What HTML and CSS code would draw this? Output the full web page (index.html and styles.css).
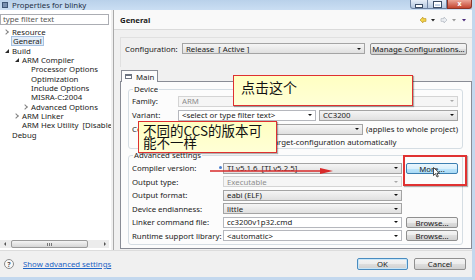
FILE: index.html
```html
<!DOCTYPE html>
<html lang="zh">
    <head>
        <meta charset="UTF-8">
        <meta name="viewport" content="width=device-width, initial-scale=1.0">
        <title>Properties for blinky</title>
        <link rel="stylesheet" href="styles.css">
    </head>
    <body>
        <div class="window">
            <div class="titlebar">
                <span class="app-icon"></span>
                <span class="title">Properties for blinky</span>
                <div class="caption-buttons">
                    <span class="cap cap-min"><i></i></span>
                    <span class="cap cap-max"><i></i></span>
                    <span class="cap cap-close">x</span>
                </div>
            </div>

            <div class="content">
                <!-- дерево страниц -->
                <div class="side">
                    <div class="filter">type filter text</div>
                    <ul class="tree">
                        <li class="l0"><span class="tw closed"></span>Resource</li>
                        <li class="l0"><span class="tw"></span><span class="sel">General</span></li>
                        <li class="l0"><span class="tw open"></span>Build</li>
                        <li class="l1"><span class="tw open"></span>ARM Compiler</li>
                        <li class="l2"><span class="tw"></span>Processor Options</li>
                        <li class="l2"><span class="tw"></span>Optimization</li>
                        <li class="l2"><span class="tw"></span>Include Options</li>
                        <li class="l2"><span class="tw"></span>MISRA-C:2004</li>
                        <li class="l2"><span class="tw closed"></span>Advanced Options</li>
                        <li class="l1"><span class="tw closed"></span>ARM Linker</li>
                        <li class="l1"><span class="tw"></span>ARM Hex Utility&nbsp; [Disabled]</li>
                        <li class="l0"><span class="tw"></span>Debug</li>
                    </ul>
                    <div class="hscroll">
                        <span class="sb-arrow left"></span>
                        <div class="sb-track">
                            <div class="sb-thumb"><span class="grip"></span></div>
                        </div>
                        <span class="sb-arrow right"></span>
                    </div>
                </div>

                <!-- страница свойств -->
                <div class="main">
                    <div class="page-head">
                        <span class="page-title">General</span>
                        <svg class="history" width="50" height="8" viewBox="0 0 50 8">
                            <path d="M2 4 L5 1 L5 2.6 L8 2.6 L8 5.4 L5 5.4 L5 7 Z" fill="#f3d34a" stroke="#b8901c" stroke-width="0.6"/>
                            <path d="M13 3 L17 3 L15 5.5 Z" fill="#222"/>
                            <path d="M29 4 L26 1 L26 2.6 L23 2.6 L23 5.4 L26 5.4 L26 7 Z" fill="#eceff3" stroke="#a9b0ba" stroke-width="0.6"/>
                            <path d="M34 3 L38 3 L36 5.5 Z" fill="#9a9a9a"/>
                            <path d="M44 3 L48 3 L46 5.5 Z" fill="#4b2a7a"/>
                        </svg>
                    </div>

                    <div class="config">
                        <div class="config-row">
                            <span class="config-label">Configuration:</span>
                            <div class="combo ro config-combo"><span class="val">Release&nbsp; [ Active ]</span><i class="arrow"></i></div>
                            <button class="btn manage">Manage Configurations...</button>
                        </div>
                    </div>

                    <div class="tabs">
                        <div class="tab"><span class="tab-icon"></span>Main</div>
                    </div>

                    <div class="tab-panel">
                        <fieldset class="group device">
                            <legend>Device</legend>
                            <div class="rows">
                                <div class="row">
                                    <span class="lbl">Family:</span>
                                    <div class="combo disabled grow"><span class="val">ARM</span><i class="arrow"></i></div>
                                </div>
                                <div class="row">
                                    <span class="lbl">Variant:</span>
                                    <div class="combo edit variant"><span class="val">&lt;select or type filter text&gt;</span><i class="arrow"></i></div>
                                    <div class="combo ro grow"><span class="val">CC3200</span><i class="arrow"></i></div>
                                </div>
                                <div class="row">
                                    <span class="lbl">Connection:</span>
                                    <div class="combo ro connection"><span class="val">Stellaris ICDI</span><i class="arrow"></i></div>
                                    <span class="note">(applies to whole project)</span>
                                </div>
                                <div class="row check-row">
                                    <span class="checkbox"></span>
                                    <span>Manage the project's target-configuration automatically</span>
                                </div>
                            </div>
                        </fieldset>

                        <fieldset class="group advanced">
                            <legend>Advanced settings</legend>
                            <div class="rows">
                                <div class="row">
                                    <span class="lbl">Compiler version:<i class="assist"></i></span>
                                    <div class="combo ro field"><span class="val">TI v5.1.6&nbsp; [TI v5.2.5]</span><i class="arrow"></i></div>
                                    <button class="btn side-btn hot">More...</button>
                                </div>
                                <div class="row">
                                    <span class="lbl">Output type:</span>
                                    <div class="combo disabled field"><span class="val">Executable</span><i class="arrow"></i></div>
                                </div>
                                <div class="row">
                                    <span class="lbl">Output format:</span>
                                    <div class="combo ro field"><span class="val">eabi (ELF)</span><i class="arrow"></i></div>
                                </div>
                                <div class="row">
                                    <span class="lbl">Device endianness:</span>
                                    <div class="combo ro field"><span class="val">little</span><i class="arrow"></i></div>
                                </div>
                                <div class="row">
                                    <span class="lbl">Linker command file:</span>
                                    <div class="combo edit field"><span class="val">cc3200v1p32.cmd</span><i class="arrow"></i></div>
                                    <button class="btn side-btn">Browse...</button>
                                </div>
                                <div class="row">
                                    <span class="lbl">Runtime support library:</span>
                                    <div class="combo edit field"><span class="val">&lt;automatic&gt;</span><i class="arrow"></i></div>
                                    <button class="btn side-btn">Browse...</button>
                                </div>
                            </div>
                        </fieldset>
                    </div>
                </div>
            </div>

            <div class="footer">
                <span class="help">?</span>
                <a class="advanced-link">Show advanced settings</a>
                <div class="actions">
                    <button class="btn default">OK</button>
                    <button class="btn">Cancel</button>
                </div>
            </div>

            <!-- пометки поверх скриншота -->
            <div class="callout click-note">点击这个</div>
            <div class="callout version-note">不同的CCS的版本可<br>能不一样</div>
            <div class="mark-box"></div>
            <svg class="mark-arrow" width="128" height="10" viewBox="0 0 128 10">
                <line x1="2" y1="5" x2="116" y2="5" stroke="#d92b2b" stroke-width="1.6"/>
                <path d="M112 2 L125 5 L112 8 Z" fill="#d92b2b"/>
            </svg>
            <svg class="cursor" width="7" height="11" viewBox="0 0 7 11">
                <path d="M0.5 0.5 L0.5 8.5 L2.5 6.6 L4 10 L5.3 9.4 L3.9 6.2 L6.5 6.2 Z" fill="#fff" stroke="#222" stroke-width="0.8"/>
            </svg>
        </div>
    </body>
</html>
```

FILE: styles.css
```css
* {
    box-sizing: border-box;
}
body {
    margin: 0;
    font-family: "Noto Sans", "DejaVu Sans", sans-serif;
    font-size: 7.8px;
    color: #1b1b1b;
}
.window {
    position: relative;
    width: 475px;
    height: 280px;
    display: flex;
    flex-direction: column;
    background: #f0f0f0;
    border-right: 3px solid #c3d8ee;
    border-bottom: 3px solid #c3d8ee;
    overflow: hidden;
}

/* заголовок окна */
.titlebar {
    height: 10px;
    flex: none;
    display: flex;
    align-items: center;
    background: linear-gradient(#b9d1ea, #cadef3);
}
.app-icon {
    width: 6px;
    height: 6px;
    margin: 0 4px 0 2px;
    background: #7890b0;
    border: 1px solid #3d5676;
}
.title {
    color: #1e2f45;
    line-height: 10px;
}
.caption-buttons {
    margin-left: auto;
    align-self: flex-start;
    display: flex;
}
.cap {
    height: 9px;
    display: flex;
    align-items: center;
    justify-content: center;
    border: 1px solid #6f84a3;
    border-top: none;
    background: linear-gradient(#e6eef8, #b4c7df);
}
.cap-min {
    width: 18px;
    border-radius: 0 0 0 3px;
}
.cap-min i {
    width: 6px;
    height: 2px;
    margin-top: 3px;
    background: #fff;
    outline: 1px solid #3b4d66;
}
.cap-max {
    width: 19px;
    border-left: none;
}
.cap-max i {
    width: 7px;
    height: 5px;
    border: 1px solid #fff;
    border-top-width: 2px;
    outline: 1px solid #3b4d66;
}
.cap-close {
    width: 25px;
    border-color: #8b3426;
    border-radius: 0 0 3px 0;
    background: linear-gradient(#eba597, #c4442f);
    color: #fff;
    font-weight: bold;
    font-size: 7px;
    line-height: 8px;
}

.content {
    height: 240px;
    flex: none;
    display: flex;
}

/* левая панель */
.side {
    width: 111px;
    flex: none;
    display: flex;
    flex-direction: column;
    background: #fff;
    overflow: hidden;
}
.filter {
    height: 11px;
    margin: 4px 2px 0 0;
    padding-left: 2px;
    border: 1px solid #abadb3;
    line-height: 9px;
    color: #555;
}
.tree {
    flex: 1;
    list-style: none;
    margin: 2.3px 0 0;
    padding: 0;
    white-space: nowrap;
}
.tree li {
    height: 9.33px;
    display: flex;
    align-items: center;
}
.tree .l0 {
    padding-left: 4px;
}
.tree .l1 {
    padding-left: 14px;
}
.tree .l2 {
    padding-left: 23px;
}
.tw {
    width: 8px;
    flex: none;
    display: flex;
    align-items: center;
}
.tw.closed::before {
    content: "";
    width: 3px;
    height: 3px;
    margin-left: 0;
    border-right: 1px solid #808080;
    border-bottom: 1px solid #808080;
    transform: rotate(-45deg);
}
.tw.open::before {
    content: "";
    margin-left: 1px;
    border-style: solid;
    border-width: 0 0 4px 4px;
    border-color: transparent transparent #2a2a2a transparent;
}
.sel {
    margin-left: -1px;
    padding: 0 1px;
    line-height: 8px;
    background: #e3edf8;
    border: 1px solid #a6c2e2;
}
.hscroll {
    height: 8px;
    flex: none;
    margin: 0 2px 2px 0;
    display: flex;
    align-items: center;
    background: #ececec;
}
.sb-arrow {
    width: 9px;
    display: flex;
    justify-content: center;
}
.sb-arrow.left::before {
    content: "";
    border-style: solid;
    border-width: 2px 2px 2px 0;
    border-color: transparent #555 transparent transparent;
}
.sb-arrow.right::before {
    content: "";
    border-style: solid;
    border-width: 2px 0 2px 2px;
    border-color: transparent transparent transparent #555;
}
.sb-track {
    flex: 1;
    height: 100%;
}
.sb-thumb {
    width: 77px;
    height: 100%;
    margin-left: 2px;
    display: flex;
    align-items: center;
    justify-content: center;
    border: 1px solid #9a9a9a;
    border-radius: 2px;
    background: linear-gradient(#f4f4f4, #d6d6d6);
}
.grip {
    width: 5px;
    height: 3px;
    border-left: 1px solid #777;
    border-right: 1px solid #777;
    background: linear-gradient(90deg, transparent 40%, #777 40%, #777 60%, transparent 60%);
}

/* правая панель */
.main {
    flex: 1;
    display: flex;
    flex-direction: column;
    margin-left: 2px;
    border-left: 1px solid #a9a9a9;
}
.page-head {
    height: 20px;
    flex: none;
    display: flex;
    align-items: center;
    justify-content: space-between;
    padding: 0 4px 0 6px;
    background: #f9f9f9;
    border-bottom: 1px solid #dadada;
}
.page-title {
    font-weight: bold;
}
.config {
    height: 30px;
    flex: none;
    margin: 7px 0 0 6px;
    padding: 4px 5px 0 4px;
    border-top: 1px solid #e0e0e0;
    border-left: 1px solid #e0e0e0;
}
.config-row {
    height: 13px;
    display: flex;
    align-items: center;
}
.config-label {
    width: 57px;
}
.config-combo {
    width: 183px;
}
.manage {
    width: 97px;
    height: 13px;
    margin-left: 5px;
}

.combo {
    height: 11px;
    display: flex;
    align-items: center;
    padding: 0 3px 0 3px;
    border: 1px solid #a4a4a4;
    white-space: nowrap;
    overflow: hidden;
}
.combo .val {
    flex: 1;
    overflow: hidden;
}
.combo .arrow {
    flex: none;
    margin-left: 3px;
    border-style: solid;
    border-width: 2.5px 2px 0 2px;
    border-color: #111 transparent transparent transparent;
}
.combo.ro {
    background: linear-gradient(#f5f5f5, #e0e0e0);
}
.combo.edit {
    background: #fff;
    border-color: #b5b7bd;
}
.combo.disabled {
    background: #f5f5f5;
    border-color: #d4d4d4;
    color: #8d8d8d;
}
.combo.disabled .arrow {
    border-top-color: #a8a8a8;
}
.grow {
    flex: 1;
}

.btn {
    height: 12px;
    padding: 0;
    font: inherit;
    color: #1b1b1b;
    border: 1px solid #8f8f8f;
    border-radius: 2px;
    background: linear-gradient(#f4f4f4, #ececec 50%, #dedede 50%, #d0d0d0);
}
.btn.hot {
    border-color: #3c7fb1;
    background: linear-gradient(#eaf6fd, #d9f0fc 50%, #bee6fd 50%, #a9daf5);
}
.btn.default {
    border-color: #4a8cc0;
    box-shadow: inset 0 0 0 1px #c8e6f8;
}

/* вкладки */
.tabs {
    height: 11px;
    flex: none;
    margin-top: 3px;
    padding-left: 7px;
    display: flex;
    position: relative;
    z-index: 1;
}
.tab {
    width: 37px;
    height: 12px;
    display: flex;
    align-items: center;
    padding-left: 3px;
    border: 1px solid #898c95;
    border-bottom: none;
    background: #fcfcfc;
}
.tab-icon {
    width: 7px;
    height: 5px;
    margin-right: 4px;
    border: 1px solid #6c7380;
    border-top-width: 2px;
    background: #fff;
}
.tab-panel {
    flex: 1;
    margin: 0 0 1px 6px;
    padding: 3px 8px 0 7px;
    border: 1px solid #898c95;
    background: #fcfcfc;
}

.group {
    margin: 0;
    padding: 0 4px 1px 3px;
    border: 1px solid #d5dde3;
    border-radius: 3px;
}
.group legend {
    margin-left: 1px;
    padding: 0 1px;
    line-height: 9px;
}
.rows {
    display: flex;
    flex-direction: column;
}
.device .rows {
    gap: 2px;
    padding-top: 1px;
}
.advanced {
    margin-top: 1.5px;
}
.advanced .rows {
    gap: 1.5px;
    padding: 2.5px 0 1.5px;
}
.row {
    height: 12px;
    display: flex;
    align-items: center;
    white-space: nowrap;
}
.device .lbl {
    width: 46px;
    flex: none;
}
.advanced .lbl {
    width: 91px;
    flex: none;
    display: flex;
    align-items: center;
}
.assist {
    width: 3px;
    height: 3px;
    margin: -2px 1px 0 auto;
    border-radius: 50%;
    background: #4a7fcf;
}
.variant {
    width: 138px;
    margin-right: 3px;
}
.connection {
    width: 185px;
}
.note {
    margin-left: 3px;
}
.check-row {
    height: 10px;
    padding-left: 47px;
}
.checkbox {
    width: 7px;
    height: 7px;
    margin-right: 6px;
    border: 1px solid #8f8f8f;
    background: #fff;
}
.field {
    width: 179px;
}
.side-btn {
    width: 52px;
    height: 11px;
    margin-left: 4px;
}

/* нижняя панель */
.footer {
    flex: 1;
    display: flex;
    align-items: center;
    padding: 0 6px 0 4px;
    border-top: 1px solid #dcdcdc;
}
.help {
    width: 10px;
    height: 10px;
    display: flex;
    align-items: center;
    justify-content: center;
    border: 1px solid #8a8a8a;
    border-radius: 50%;
    background: #fafafa;
    color: #555;
    font-size: 7px;
    font-weight: bold;
}
.advanced-link {
    margin-left: 9px;
    color: #1c62c4;
    text-decoration: underline;
}
.actions {
    margin-left: auto;
    display: flex;
    gap: 6px;
}
.actions .btn {
    width: 52px;
}
.actions .default {
    width: 51px;
}

/* красные пометки */
.callout {
    position: absolute;
    z-index: 10;
    border: 1.5px solid #de3030;
    background: linear-gradient(#ffffc2, #ffffd6);
    box-shadow: 1px 1px 1px rgba(0, 0, 0, 0.3);
    font-family: "Noto Sans CJK SC", sans-serif;
    color: #111;
    white-space: nowrap;
}
.click-note {
    left: 233px;
    top: 75px;
    width: 180px;
    height: 31px;
    padding: 4px 0 0 7px;
    font-size: 14px;
    line-height: 14px;
}
.version-note {
    left: 138px;
    top: 121px;
    width: 139px;
    height: 32px;
    padding: 1.5px 0 0 4px;
    font-size: 13.5px;
    line-height: 12.5px;
}
.mark-box {
    position: absolute;
    z-index: 10;
    left: 403px;
    top: 155px;
    width: 64px;
    height: 31px;
    border: 2px solid #e03232;
    box-shadow: 1px 1px 1px rgba(0, 0, 0, 0.3);
}
.mark-arrow {
    position: absolute;
    z-index: 10;
    left: 208px;
    top: 166px;
}
.cursor {
    position: absolute;
    z-index: 11;
    left: 433px;
    top: 167px;
}
```
